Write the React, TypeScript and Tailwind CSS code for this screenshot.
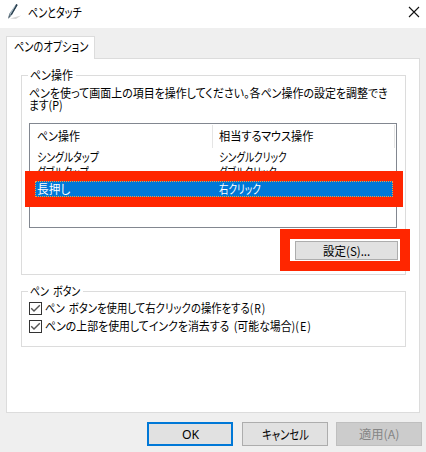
import { useLayoutEffect, useRef, useState } from "react";
import type { ReactNode } from "react";

/** One line of text, condensed to the width that its box is given. */
function FitText({ children, className }: { children: ReactNode; className: string }) {
  const box = useRef<HTMLSpanElement>(null);
  const text = useRef<HTMLSpanElement>(null);
  const [scale, setScale] = useState(1);
  useLayoutEffect(() => {
    if (box.current && text.current && text.current.offsetWidth) {
      setScale(box.current.offsetWidth / text.current.offsetWidth);
    }
  }, [children]);
  return (
    <span ref={box} className={`block shrink-0 whitespace-nowrap ${className}`}>
      <span ref={text} className="inline-block origin-left" style={{ transform: `scaleX(${scale})` }}>
        {children}
      </span>
    </span>
  );
}

function Group({ title, titleWidth, className, children }: { title: string; titleWidth: string; className: string; children: ReactNode }) {
  return (
    <section className={`ml-[14px] w-[385px] border border-[#dcdcdc] ${className}`}>
      <div className="-mt-[8px] ml-[6px] h-[14px] w-fit bg-white pl-[2px] pr-[3px] leading-[14px]">
        <FitText className={titleWidth}>{title}</FitText>
      </div>
      {children}
    </section>
  );
}

function Row({ left, right, leftWidth, rightWidth, className }: { left: string; right: string; leftWidth: string; rightWidth: string; className: string }) {
  return (
    <div className={`flex pl-[7px] ${className}`}>
      <div className="w-[182px] shrink-0">
        <FitText className={leftWidth}>{left}</FitText>
      </div>
      <FitText className={rightWidth}>{right}</FitText>
    </div>
  );
}

function Check({ label, accessKey, width }: { label: string; accessKey: string; width: string }) {
  return (
    <label className="flex h-[18px] items-center gap-[3px]">
      <span className="flex h-[13px] w-[13px] shrink-0 items-center justify-center border border-[#333] bg-white">
        <svg width="11" height="11" viewBox="0 0 11 11" fill="none" stroke="#555" strokeWidth="1.4">
          <path d="M1.2 5.2 4 8 9.8 2.2" />
        </svg>
      </span>
      <FitText className={width}>
        {label}
        <span className="tracking-[1px]">{accessKey}</span>
      </FitText>
    </label>
  );
}

export default function App() {
  return (
    <main className="h-[452px] w-[426px] overflow-hidden bg-[#efefef] font-['Noto_Sans_CJK_JP','Liberation_Sans',sans-serif] text-[12px] leading-[18px] text-black [font-feature-settings:'palt'] [word-spacing:2px]">
      <header className="flex h-[28px] items-start bg-white">
        <svg className="ml-[6px] mt-[3px]" width="18" height="18" viewBox="0 0 18 18">
          <path d="M4 15.5 15 12.5 10 16Z" fill="#d5d5d5" />
          <path d="M10.3 1 11.6 2 5.8 12 2.2 15.8 3.2 10.8Z" fill="#788b98" />
          <path d="M10.3 1 11.6 2 5.8 12 4.6 11.3Z" fill="#283e4d" />
          <path d="M9.2 2.7 4.3 11" stroke="#c7dae4" strokeWidth=".7" />
          <path d="M2.2 15.8 3 12.2 4.7 13.1Z" fill="#536570" />
        </svg>
        <FitText className="ml-[4px] mt-[3px] w-[54px] text-[13px]">ペンとタッチ</FitText>
        <svg className="ml-auto mr-[6px] mt-[6px]" width="12" height="12" viewBox="0 0 12 12" stroke="#111" strokeWidth="1.1">
          <path d="M1 1 11 11M11 1 1 11" />
        </svg>
      </header>

      <div className="ml-[6px] mt-[8px] flex h-[22px] w-[89px]">
        <div className="relative z-10 h-[23px] w-[89px] shrink-0 border border-b-0 border-[#dcdcdc] bg-white pl-[7px]">
          <FitText className="w-[74px] text-[13px]">ペンのオプション</FitText>
        </div>
      </div>

      <div className="ml-[6px] flex h-[355px] w-[414px] flex-col border border-[#dcdcdc] bg-white">
        <Group title="ペン操作" titleWidth="w-[43px]" className="mt-[16px] h-[200px] shrink-0">
          <div className="ml-[7px] mt-[5px] leading-[12px]">
            <FitText className="h-[12px] w-[359px]">ペンを使って画面上の項目を操作してください。各ペン操作の設定を調整でき</FitText>
            <FitText className="h-[12px] w-[34px]">ます(P)</FitText>
          </div>
          <div className="relative ml-[7px] mt-[12px] h-[105px] w-[368px] border border-[#828790] bg-white">
            <div className="flex h-[24px] pt-px">
              <div className="flex w-[183px] border-r border-[#e5e5e5] pl-[7px] pt-[2px]">
                <FitText className="w-[43px]">ペン操作</FitText>
              </div>
              <div className="flex w-[182px] border-r border-[#e5e5e5] pl-[6px] pt-[2px]">
                <FitText className="w-[94px]">相当するマウス操作</FitText>
              </div>
            </div>
            <Row left="シングルタップ" right="シングルクリック" leftWidth="w-[62px]" rightWidth="w-[68px]" className="h-[15px]" />
            <Row left="ダブルタップ" right="ダブルクリック" leftWidth="w-[52px]" rightWidth="w-[58px]" className="h-[17px]" />
            <div className="absolute -left-[5px] top-[47px] h-[36px] w-[378px] border-[10px] border-[#ff2600]">
              <div className="flex h-[16px] border border-dotted border-[#ff9b38] bg-[#0078d7] pl-px leading-[13px] text-white">
                <div className="w-[182px] shrink-0">
                  <FitText className="w-[33px]">長押し</FitText>
                </div>
                <FitText className="w-[42px]">右クリック</FitText>
              </div>
            </div>
          </div>
          <div className="relative z-10 ml-[258px] mt-px h-[42px] w-[130px] border-[10px] border-[#ff2600] bg-white pl-[5px] pt-[2px]">
            <button className="flex h-[19px] w-[103px] items-center justify-center border border-[#adadad] bg-[#e1e1e1]">
              <FitText className="w-[47px]">設定(S)...</FitText>
            </button>
          </div>
        </Group>

        <Group title="ペン ボタン" titleWidth="w-[50px]" className="mt-[16px] h-[56px] shrink-0">
          <div className="ml-[7px] mt-px">
            <Check label="ペン ボタンを使用して右クリックの操作をする" accessKey="(R)" width="w-[221px]" />
            <Check label="ペンの上部を使用してインクを消去する (可能な場合)" accessKey="(E)" width="w-[267px]" />
          </div>
        </Group>
      </div>

      <footer className="ml-[147px] mt-[9px] flex h-[24px]">
        <button className="mr-[9px] flex w-[86px] items-center justify-center border-2 border-[#0078d7] bg-[#e1e1e1]">
          <FitText className="w-[17px] font-['Noto_Sans',sans-serif] text-[13px]">OK</FitText>
        </button>
        <button className="mr-[8px] flex w-[86px] items-center justify-center border border-[#adadad] bg-[#e1e1e1]">
          <FitText className="w-[47px] text-[13px]">キャンセル</FitText>
        </button>
        <button className="flex w-[86px] items-center justify-center border border-[#bfbfbf] bg-[#cccccc] text-[#858585]">
          <FitText className="w-[40px]">適用(A)</FitText>
        </button>
      </footer>
    </main>
  );
}
